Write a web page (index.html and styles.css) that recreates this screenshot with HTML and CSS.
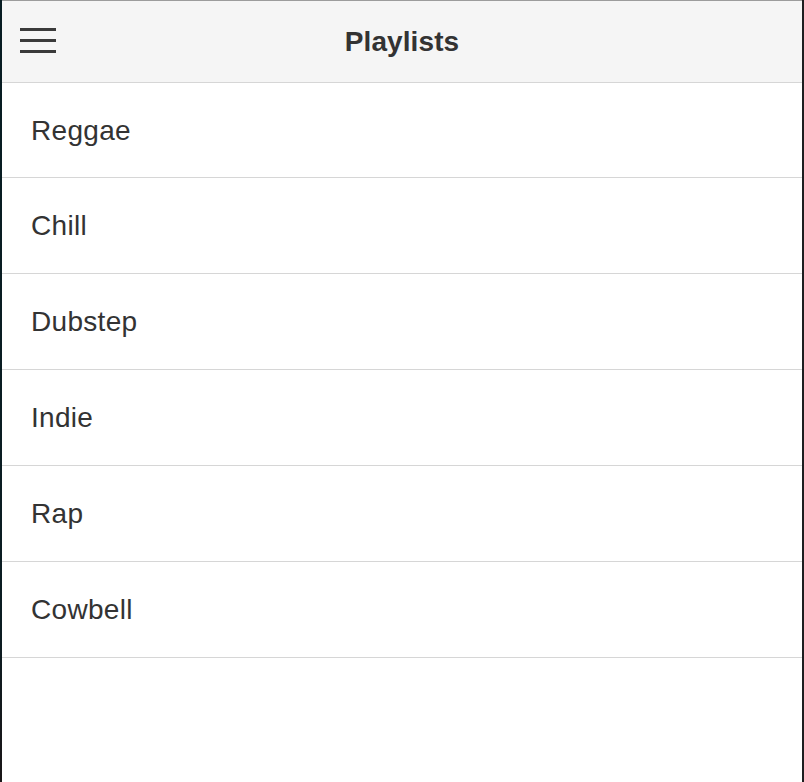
FILE: index.html
```html
<!DOCTYPE html>
<html lang="en">
<head>
<meta charset="utf-8">
<title>Playlists</title>
<link rel="stylesheet" href="styles.css">
</head>
<body>
<div class="frame">
  <div class="edge-left"></div>
  <main class="view">
    <header class="bar">
      <button class="menu-btn" aria-label="Menu">
        <span class="line"></span>
        <span class="line"></span>
        <span class="line"></span>
      </button>
      <h1 class="title">Playlists</h1>
    </header>
    <ul class="list">
      <li class="item">Reggae</li>
      <li class="item">Chill</li>
      <li class="item">Dubstep</li>
      <li class="item">Indie</li>
      <li class="item">Rap</li>
      <li class="item">Cowbell</li>
    </ul>
  </main>
  <div class="edge-right"></div>
</div>
</body>
</html>
```

FILE: styles.css
```css
html, body {
  margin: 0;
  padding: 0;
  height: 100%;
  background: #ffffff;
}

body {
  font-family: "Liberation Sans", Arial, Helvetica, sans-serif;
  color: #333333;
}

.frame {
  display: flex;
  height: 782px;
  width: 804px;
}

.edge-left {
  width: 2px;
  flex: none;
  background: linear-gradient(#071c22, #0b1c22 80%, #1a1618);
}

.edge-right {
  width: 2px;
  flex: none;
  background: #1e1e20;
}

.view {
  flex: 1;
  display: flex;
  flex-direction: column;
  background: #ffffff;
  border-top: 1px solid #9c9c9c;
}

.bar {
  height: 81px;
  flex: none;
  background: #f5f5f5;
  border-bottom: 1px solid #d6d6d6;
  display: flex;
  align-items: center;
  justify-content: center;
  position: relative;
}

.menu-btn {
  position: absolute;
  left: 18px;
  top: 27px;
  width: 36px;
  height: 25px;
  padding: 0;
  margin: 0;
  border: 0;
  background: transparent;
  display: flex;
  flex-direction: column;
  justify-content: space-between;
}

.line {
  display: block;
  width: 36px;
  height: 3px;
  background: #3a3a3a;
}

.title {
  margin: 0;
  font-size: 28px;
  font-weight: 700;
  color: #333333;
  letter-spacing: 0.1px;
}

.list {
  list-style: none;
  margin: 0;
  padding: 0;
}

.item {
  height: 95px;
  border-bottom: 1px solid #d6d6d6;
  display: flex;
  align-items: center;
  padding-left: 29px;
  padding-top: 1px;
  box-sizing: border-box;
  height: 96px;
  font-size: 28px;
  letter-spacing: 0.3px;
  color: #333333;
}

.item:first-child {
  height: 95px;
}
```
